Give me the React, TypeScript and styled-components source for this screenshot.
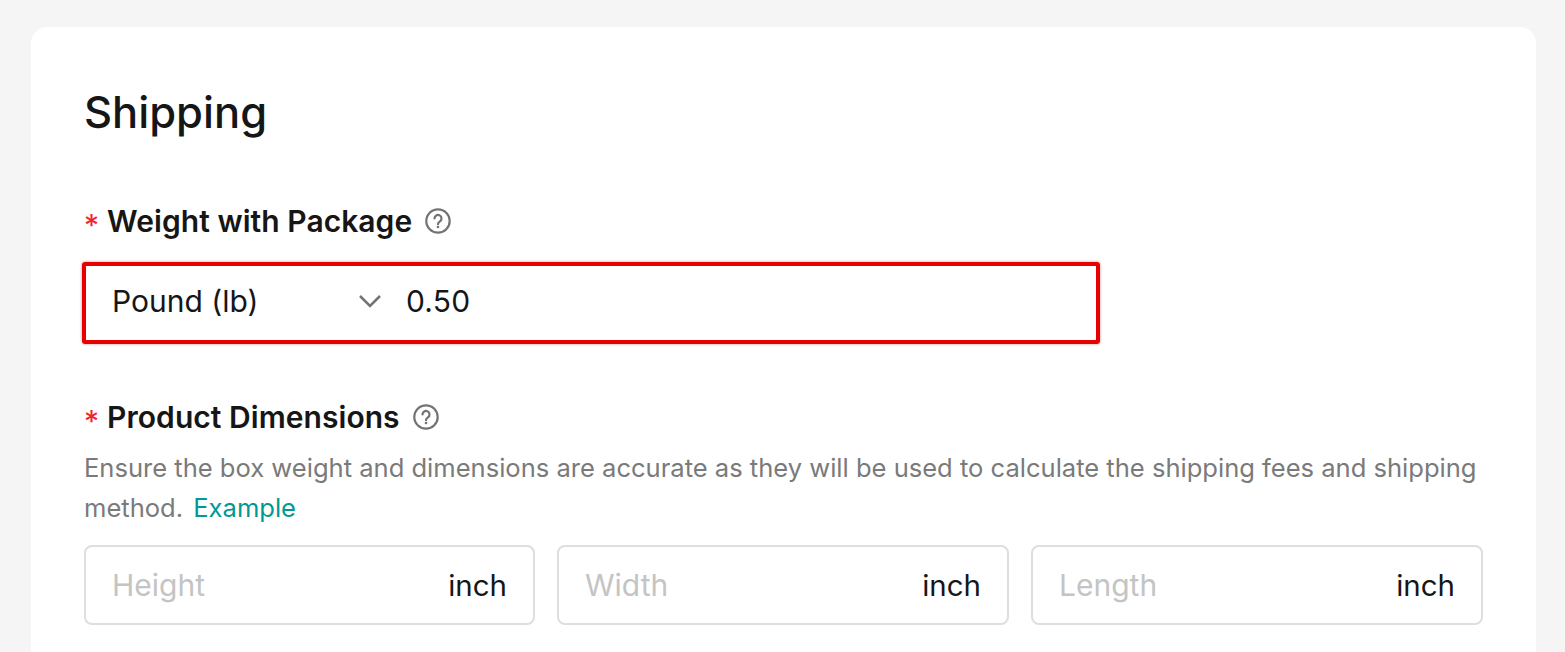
import React from "react";
import styled, { createGlobalStyle } from "styled-components";

const Global = createGlobalStyle`
  html, body { margin: 0; padding: 0; background: #f5f5f5; }
  body { font-family: Inter, "Liberation Sans", sans-serif; width: 1565px; height: 652px; overflow: hidden; }
`;
const Page = styled.div`
  padding: 27px 29px 0 31px;
  height: 652px;
  box-sizing: border-box;
  overflow: hidden;
`;
const Card = styled.section`
  background: #fff;
  border-radius: 16px 16px 0 0;
  padding: 59px 53px 40px;
  height: 700px;
  box-sizing: border-box;
`;
const Title = styled.h2`
  margin: 0 0 67px;
  font-size: 43.5px;
  line-height: 52px;
  font-weight: 500;
  color: #161616;
`;
const Label = styled.div`
  display: flex;
  align-items: center;
  height: 32px;
  font-size: 30px;
  font-weight: 600;
  letter-spacing: 0.05px;
  color: #161616;
`;
const Star = styled.span`
  color: #f5222d;
  margin: 8px 8px 0 0;
  font-size: 30px;
  font-weight: 400;
`;
const Help = styled.svg`
  margin-left: 13px;
  width: 26px;
  height: 26px;
`;
const HelpIcon = () => (
  <Help viewBox="0 0 26 26" fill="none" stroke="#737373" strokeWidth="2.2">
    <circle cx="13" cy="13" r="11.7" />
    <path d="M9.5 10.5a3.5 3.5 0 1 1 5.4 2.9c-1.2.8-1.9 1.4-1.9 2.8" strokeLinecap="round" />
    <circle cx="13" cy="19" r="1.3" fill="#737373" stroke="none" />
  </Help>
);
const Weight = styled.div`
  display: flex;
  align-items: center;
  margin: 25px 0 57px -2px;
  width: 1018px;
  height: 82px;
  box-sizing: border-box;
  border: 4px solid #e60000;
  border-radius: 3px;
  box-shadow: 0 0 3px rgba(120, 0, 0, 0.45);
  padding: 0 0 4px 26px;
  font-size: 30px;
  color: #161616;
`;
const Unit = styled.div`
  display: flex;
  align-items: center;
  justify-content: space-between;
  width: 271px;
  margin-right: 23px;
`;
const Amount = styled.span`
  letter-spacing: 0.2px;
`;
const Hint = styled.p`
  margin: 15px 0 17px;
  font-size: 25.55px;
  line-height: 40px;
  color: #7a7a7a;
  width: 1400px;
`;
const ExampleLink = styled.a`
  color: #009995;
  margin-left: 3px;
`;
const Row = styled.div`
  display: grid;
  grid-template-columns: 451px 452px 452px;
  column-gap: 22px;
`;
const Field = styled.div`
  display: flex;
  align-items: center;
  justify-content: space-between;
  height: 80px;
  box-sizing: border-box;
  border: 2px solid #dedede;
  border-radius: 8px;
  padding: 0 26px;
  font-size: 30px;
  color: #161616;
`;
const Placeholder = styled.span`
  color: #c4c4c4;
`;
const Suffix = styled.span`
  font-size: 29.5px;
`;

export default function App() {
  return (
    <Page>
      <Global />
      <Card>
        <Title>Shipping</Title>
        <Label><Star>*</Star>Weight with Package<HelpIcon /></Label>
        <Weight>
          <Unit>
            <span>Pound (lb)</span>
            <svg width="26" height="16" viewBox="0 0 26 16" fill="none" stroke="#737373" strokeWidth="2.5"><path d="M3 3l10 10L23 3" /></svg>
          </Unit>
          <Amount>0.50</Amount>
        </Weight>
        <Label><Star>*</Star>Product Dimensions<HelpIcon /></Label>
        <Hint>Ensure the box weight and dimensions are accurate as they will be used to calculate the shipping fees and shipping method. <ExampleLink>Example</ExampleLink></Hint>
        <Row>
          {["Height", "Width", "Length"].map((n) => (
            <Field key={n}><Placeholder>{n}</Placeholder><Suffix>inch</Suffix></Field>
          ))}
        </Row>
      </Card>
    </Page>
  );
}
